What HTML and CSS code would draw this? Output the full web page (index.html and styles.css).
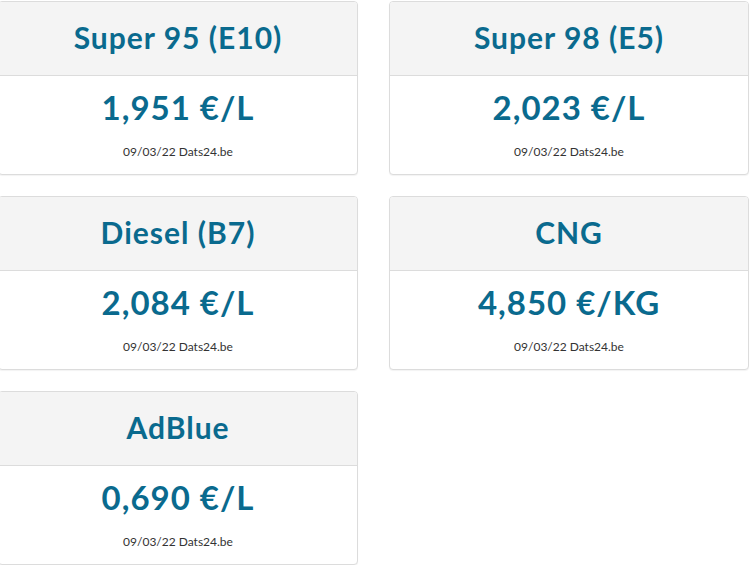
FILE: index.html
```html
<!DOCTYPE html>
<html>
<head>
<meta charset="utf-8">
<link rel="stylesheet" href="styles.css">
</head>
<body>
<div class="grid">
  <div class="card">
    <div class="card-head"><h2 class="title">Super 95 (E10)</h2></div>
    <div class="card-body"><div class="price">1,951 €/L</div><div class="meta">09/03/22 Dats24.be</div></div>
  </div>
  <div class="card">
    <div class="card-head"><h2 class="title">Super 98 (E5)</h2></div>
    <div class="card-body"><div class="price">2,023 €/L</div><div class="meta">09/03/22 Dats24.be</div></div>
  </div>
  <div class="card">
    <div class="card-head"><h2 class="title">Diesel (B7)</h2></div>
    <div class="card-body"><div class="price">2,084 €/L</div><div class="meta">09/03/22 Dats24.be</div></div>
  </div>
  <div class="card">
    <div class="card-head"><h2 class="title">CNG</h2></div>
    <div class="card-body"><div class="price">4,850 €/KG</div><div class="meta">09/03/22 Dats24.be</div></div>
  </div>
  <div class="card">
    <div class="card-head"><h2 class="title">AdBlue</h2></div>
    <div class="card-body"><div class="price">0,690 €/L</div><div class="meta">09/03/22 Dats24.be</div></div>
  </div>
</div>
</body>
</html>
```
FILE: styles.css
```css
html, body {
  margin: 0;
  padding: 0;
  background: #fff;
  font-family: Lato, "Open Sans", sans-serif;
}
.grid {
  display: grid;
  grid-template-columns: 360px 360px;
  column-gap: 31px;
  row-gap: 21px;
  margin: 1px 0 0 -2px;
}
.card {
  border: 1px solid #dcdcdc;
  border-radius: 4px;
  background: #fff;
  box-shadow: 0 1px 1px rgba(0,0,0,0.05);
  overflow: hidden;
}
.card-head {
  background: #f4f4f4;
  border-bottom: 1px solid #dcdcdc;
  height: 74px;
  box-sizing: border-box;
  padding-bottom: 4px;
  display: flex;
  align-items: center;
  justify-content: center;
}
.title {
  margin: 0;
  font-size: 30px;
  font-weight: 700;
  letter-spacing: 1px;
  color: #0a6a8e;
  line-height: 1;
  text-align: center;
}
.card-body {
  height: 98px;
  display: flex;
  flex-direction: column;
  align-items: center;
}
.price {
  margin-top: 15px;
  font-size: 33px;
  font-weight: 700;
  letter-spacing: 1px;
  color: #0a6a8e;
  line-height: 1;
}
.meta {
  margin-top: 22px;
  font-size: 12px;
  color: #333;
  line-height: 1;
}
```
